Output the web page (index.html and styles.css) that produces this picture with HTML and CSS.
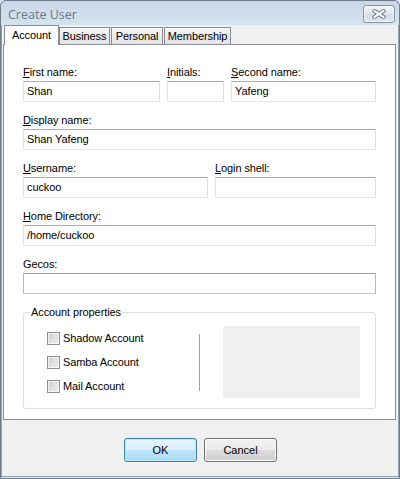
FILE: index.html
```html
<!DOCTYPE html>
<html>
<head>
<meta charset="utf-8">
<link rel="stylesheet" href="styles.css">
</head>
<body>
<div class="window">
  <div class="titlebar">
    <span class="title">Create User</span>
    <div class="close">
      <svg width="14" height="10" viewBox="0 0 14 10">
        <path d="M2.5 2 L11.5 8 M11.5 2 L2.5 8" stroke="#76828f" stroke-width="4" stroke-linecap="square" fill="none"/>
        <path d="M2.5 2 L11.5 8 M11.5 2 L2.5 8" stroke="#ffffff" stroke-width="2" stroke-linecap="square" fill="none"/>
      </svg>
    </div>
  </div>
  <div class="client">
    <div class="tabs">
      <div class="tab active tab-account">Account</div>
      <div class="tab tab-business">Business</div>
      <div class="tab tab-personal">Personal</div>
      <div class="tab tab-membership">Membership</div>
    </div>
    <div class="pane">
      <div class="row row-names">
        <div class="field"><div class="label"><u>F</u>irst name:</div><div class="input">Shan</div></div>
        <div class="field"><div class="label"><u>I</u>nitials:</div><div class="input"></div></div>
        <div class="field"><div class="label"><u>S</u>econd name:</div><div class="input">Yafeng</div></div>
      </div>
      <div class="row">
        <div class="field"><div class="label"><u>D</u>isplay name:</div><div class="input">Shan Yafeng</div></div>
      </div>
      <div class="row row-user">
        <div class="field"><div class="label"><u>U</u>sername:</div><div class="input">cuckoo</div></div>
        <div class="field"><div class="label"><u>L</u>ogin shell:</div><div class="input"></div></div>
      </div>
      <div class="row">
        <div class="field"><div class="label"><u>H</u>ome Directory:</div><div class="input">/home/cuckoo</div></div>
      </div>
      <div class="row">
        <div class="field"><div class="label">Gecos:</div><div class="input focus"></div></div>
      </div>
      <fieldset class="group">
        <legend>Account properties</legend>
        <div class="group-body">
          <div class="checks">
            <div class="check"><span class="cb"></span><span>Shadow Account</span></div>
            <div class="check"><span class="cb"></span><span>Samba Account</span></div>
            <div class="check"><span class="cb"></span><span>Mail Account</span></div>
          </div>
          <div class="sep"></div>
          <div class="preview"></div>
        </div>
      </fieldset>
    </div>
    <div class="buttons">
      <button class="btn default">OK</button>
      <button class="btn">Cancel</button>
    </div>
  </div>
</div>
</body>
</html>
```

FILE: styles.css
```css
html, body {
  margin: 0;
  padding: 0;
  background: #dde7f1;
}
body {
  font-family: "Liberation Sans", Arial, sans-serif;
  font-size: 11px;
  letter-spacing: -0.1px;
  color: #000;
}
.window {
  width: 400px;
  height: 479px;
  box-sizing: border-box;
  border: 1px solid #6e7b8b;
  border-radius: 6px 6px 0 0;
  background: linear-gradient(#c8d7e8, #d9e4f0 28px, #dde7f1);
  display: flex;
  flex-direction: column;
  overflow: hidden;
}
.titlebar {
  height: 24px;
  flex: none;
  display: flex;
  justify-content: space-between;
  padding: 0 4px 0 7px;
}
.title {
  font-family: "Open Sans", sans-serif;
  font-size: 12.5px;
  letter-spacing: 0;
  color: #6b7889;
  line-height: 17px;
  margin-top: 5px;
}
.close {
  width: 32px;
  height: 18px;
  box-sizing: border-box;
  margin-top: 4px;
  border: 1px solid #8593a4;
  border-radius: 3px;
  background: linear-gradient(#f1f4f8, #e0e7ef 50%, #d3dce7 50%, #dde5ee);
  box-shadow: inset 0 0 0 1px rgba(255, 255, 255, 0.6);
  display: flex;
  align-items: center;
  justify-content: center;
}
.client {
  flex: 1;
  display: flex;
  flex-direction: column;
  background: #f0f0f0;
  border: 1px solid #95a2b0;
  border-top: none;
  margin-bottom: 1px;
}
.tabs {
  display: flex;
  align-items: flex-end;
  height: 20px;
  margin: 0 0 -1px 2px;
  position: relative;
  z-index: 1;
}
.tab {
  box-sizing: border-box;
  height: 18px;
  border: 1px solid #898c95;
  background: linear-gradient(#f5f5f5, #e3e3e3);
  box-shadow: inset 0 1px 0 #ffffff;
  text-align: center;
  line-height: 13px;
  padding-top: 2px;
}
.tab.active {
  height: 20px;
  background: #fff;
  box-shadow: none;
  border-bottom: none;
  padding-top: 3px;
}
.tab-account { width: 55px; }
.tab-business { width: 51px; }
.tab-personal { width: 52px; margin-left: 1px; }
.tab-membership { width: 67px; margin-left: 1px; }
.pane {
  margin: 0 2px 0 1px;
  border: 1px solid #898c95;
  background: #fff;
  padding: 21px 19px 10px;
}
.row {
  display: grid;
  grid-template-columns: 1fr;
  column-gap: 7px;
  margin-bottom: 12px;
}
.row-names { grid-template-columns: 137px 57px 1fr; }
.row-user { grid-template-columns: 185px 1fr; }
.label {
  line-height: 13px;
  margin-bottom: 2px;
  white-space: nowrap;
}
.input {
  height: 21px;
  box-sizing: border-box;
  border: 1px solid;
  border-color: #abadb3 #dbdfe6 #e3e9ef #e2e3ea;
  background: #fff;
  padding: 0 3px;
  line-height: 19px;
  white-space: nowrap;
}
.input.focus {
  border-color: #8da3b2 #a9bcc9 #b7c8d4 #a9bcc9;
}
.group {
  margin: -1px 0 0;
  padding: 7px 0 10px;
  border: 1px solid #d5dfe5;
  border-radius: 3px;
  min-width: 0;
}
.group legend {
  margin-left: 6px;
  padding: 0 1px;
  line-height: 14px;
}
.group-body {
  display: flex;
  align-items: center;
  height: 72px;
  padding: 0 15px 0 23px;
}
.checks {
  width: 152px;
  display: flex;
  flex-direction: column;
  gap: 10px;
}
.check {
  display: flex;
  align-items: center;
  height: 14px;
  white-space: nowrap;
}
.cb {
  width: 13px;
  height: 13px;
  box-sizing: border-box;
  border: 1px solid #8e8f8f;
  background: linear-gradient(135deg, #cdcdcd, #f3f3f3);
  box-shadow: inset 0 0 0 1px #f4f4f4;
  margin-right: 3px;
  flex: none;
}
.sep {
  width: 1px;
  height: 57px;
  background: #a0a0a0;
  margin-right: 23px;
}
.preview {
  width: 137px;
  height: 72px;
  background: #f0f0f0;
}
.buttons {
  display: flex;
  justify-content: center;
  gap: 7px;
  margin-top: 18px;
  padding-left: 1px;
}
.btn {
  width: 73px;
  height: 24px;
  box-sizing: border-box;
  border: 1px solid #707070;
  border-radius: 3px;
  background: linear-gradient(#f2f2f2, #ebebeb 50%, #dddddd 50%, #cfcfcf);
  box-shadow: inset 0 0 0 1px #fbfbfb;
  font-family: "Liberation Sans", Arial, sans-serif;
  font-size: 11px;
  color: #000;
  padding: 0;
  margin: 0;
}
.btn.default {
  border-color: #3c7fb1;
  background: linear-gradient(#e8f5fc, #d8effb 50%, #bde5fa 50%, #a9daf4);
  box-shadow: inset 0 0 0 1px #bfe7fa;
}
```
